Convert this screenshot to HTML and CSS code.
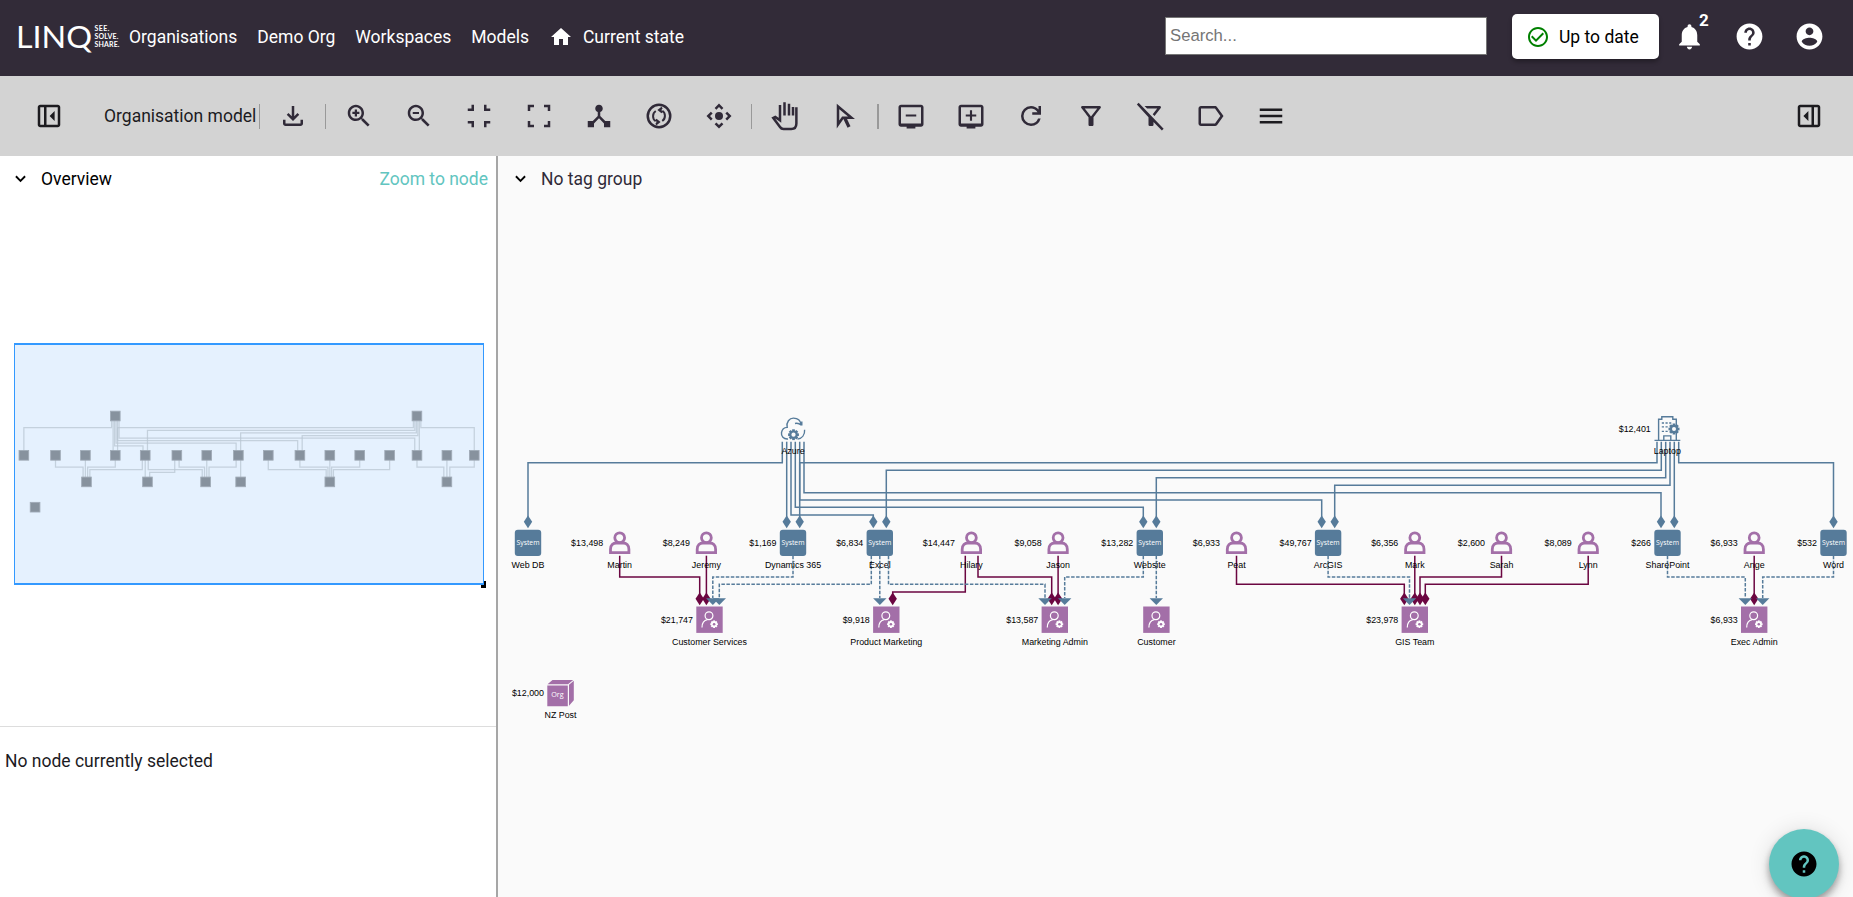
FILE: index.html
```
<!DOCTYPE html>
<html lang="en">

<head>
    <meta charset="UTF-8">
    <meta name="viewport" content="width=device-width, initial-scale=1.0">
    <title>LINQ - Organisation model</title>
    <link rel="stylesheet" href="styles.css">
</head>

<body>
    <header class="header">
        <svg class="logo" width="104" height="50" viewBox="0 -10 104 50">
            <text class="logo-name" x="-1" y="26.5" textLength="76" lengthAdjust="spacingAndGlyphs">LINQ</text>
            <text class="logo-tag" x="77.5" y="10" textLength="15">SEE.</text>
            <text class="logo-tag" x="77.5" y="18" textLength="24">SOLVE.</text>
            <text class="logo-tag" x="77.5" y="26" textLength="25">SHARE.</text>
        </svg>
        <nav class="nav">
            <a>Organisations</a>
            <a>Demo Org</a>
            <a>Workspaces</a>
            <a>Models</a>
            <a class="current">
                <svg width="24" height="24" viewBox="0 0 24 24"><path d="M10 20v-6h4v6h5v-8h3L12 3 2 12h3v8z"/></svg>
                Current state
            </a>
        </nav>
        <input class="search" type="text" placeholder="Search...">
        <button class="status">
            <svg width="24" height="24" viewBox="0 0 24 24"><path d="M16.59 7.58L10 14.17l-3.59-3.58L5 12l5 5 8-8zM12 2C6.48 2 2 6.48 2 12s4.48 10 10 10 10-4.48 10-10S17.52 2 12 2zm0 18c-4.42 0-8-3.58-8-8s3.58-8 8-8 8 3.58 8 8-3.58 8-8 8z"/></svg>
            Up to date
        </button>
        <div class="header-icons">
            <span class="header-icon">
                <svg viewBox="0 0 24 24"><path d="M12 22c1.1 0 2-.9 2-2h-4c0 1.1.89 2 2 2zm6-6v-5c0-3.07-1.64-5.64-4.5-6.32V4c0-.83-.67-1.5-1.5-1.5s-1.5.67-1.5 1.5v.68C7.63 5.36 6 7.92 6 11v5l-2 2v1h16v-1l-2-2z"/></svg>
                <b class="badge">2</b>
            </span>
            <span class="header-icon">
                <svg viewBox="0 0 24 24"><path d="M12 2C6.48 2 2 6.48 2 12s4.48 10 10 10 10-4.48 10-10S17.52 2 12 2zm1 17h-2v-2h2v2zm2.07-7.75l-.9.92C13.45 12.9 13 13.5 13 15h-2v-.5c0-1.1.45-2.1 1.17-2.83l1.24-1.26c.37-.36.59-.86.59-1.41 0-1.1-.9-2-2-2s-2 .9-2 2H8c0-2.21 1.79-4 4-4s4 1.79 4 4c0 .88-.36 1.68-.93 2.25z"/></svg>
            </span>
            <span class="header-icon">
                <svg viewBox="0 0 24 24"><path d="M12 2C6.48 2 2 6.48 2 12s4.48 10 10 10 10-4.48 10-10S17.52 2 12 2zm0 3c1.66 0 3 1.34 3 3s-1.34 3-3 3-3-1.34-3-3 1.34-3 3-3zm0 14.2c-2.5 0-4.71-1.28-6-3.22.03-1.99 4-3.08 6-3.08 1.99 0 5.97 1.09 6 3.08-1.29 1.94-3.5 3.22-6 3.22z"/></svg>
            </span>
        </div>
    </header>

    <div class="toolbar">
        <span class="tool dark"><svg viewBox="0 0 24 24"><path d="M16.5 16V8l-4 4 4 4zM5 21q-.83 0-1.41-.59T3 19V5q0-.83.59-1.41T5 3h14q.83 0 1.41.59T21 5v14q0 .83-.59 1.41T19 21H5zm3-2V5H5v14h3zm2 0h9V5h-9v14z"/></svg></span>
        <span class="toolbar-title">Organisation model</span>
        <span class="divider"></span>
        <span class="tool"><svg viewBox="0 0 24 24"><path d="M12 16l-5-5 1.4-1.45 2.6 2.6V4h2v8.15l2.6-2.6L17 11l-5 5zm-6 4q-.83 0-1.41-.59T4 18v-3h2v3h12v-3h2v3q0 .83-.59 1.41T18 20H6z"/></svg></span>
        <span class="divider"></span>
        <span class="tool"><svg viewBox="0 0 24 24"><path d="M15.5 14h-.79l-.28-.27C15.41 12.59 16 11.11 16 9.5 16 5.91 13.09 3 9.5 3S3 5.91 3 9.5 5.91 16 9.5 16c1.61 0 3.09-.59 4.23-1.57l.27.28v.79l5 4.99L20.49 19l-4.99-5zm-6 0C7.01 14 5 11.99 5 9.5S7.01 5 9.5 5 14 7.01 14 9.5 11.99 14 9.5 14zM8.6 6.7h1.8v1.9h1.9v1.8h-1.9v1.9H8.6v-1.9H6.7V8.6h1.9z"/></svg></span>
        <span class="tool"><svg viewBox="0 0 24 24"><path d="M15.5 14h-.79l-.28-.27C15.41 12.59 16 11.11 16 9.5 16 5.91 13.09 3 9.5 3S3 5.91 3 9.5 5.91 16 9.5 16c1.61 0 3.09-.59 4.23-1.57l.27.28v.79l5 4.99L20.49 19l-4.99-5zm-6 0C7.01 14 5 11.99 5 9.5S7.01 5 9.5 5 14 7.01 14 9.5 11.99 14 9.5 14zM7 8.7h5v1.7H7z"/></svg></span>
        <span class="tool"><svg viewBox="0 0 24 24"><path d="M6 3h2v5H3V6h3zM16 3h2v3h3v2h-5zM3 16h5v5H6v-3H3zM16 16h5v2h-3v3h-2z"/></svg></span>
        <span class="tool"><svg viewBox="0 0 24 24"><path d="M3 3h5v2H5v3H3zM16 3h5v5h-2V5h-3zM3 16h2v3h3v2H3zM19 16h2v5h-5v-2h3z"/></svg></span>
        <span class="tool"><svg viewBox="0 0 24 24"><path d="M17 16l-4-4V8.82C14.16 8.4 15 7.3 15 6c0-1.66-1.34-3-3-3S9 4.34 9 6c0 1.3.84 2.4 2 2.82V12l-4 4H3v5h5v-3.05l4-4.2 4 4.2V21h5v-5h-4z"/></svg></span>
        <span class="tool"><svg viewBox="0 0 24 24" class="line"><circle cx="12" cy="12" r="9"/><path class="thin" d="M9.3 16.2C6.5 14.3 6.6 9.9 9.4 8M14.7 7.8C17.5 9.7 17.4 14.1 14.6 16M14.5 5.3 12 7.2l2.5 2M12 7.2h2.2M9.5 14.8l2.5 2-2.5 2M12 16.8H9.8"/></svg></span>
        <span class="tool"><svg viewBox="0 0 24 24"><circle cx="12" cy="12" r="3.2"/><path d="M12 2l3.5 3.5-1.4 1.4L12 4.8 9.9 6.9 8.5 5.5zM12 22l3.5-3.5-1.4-1.4-2.1 2.1-2.1-2.1-1.4 1.4zM2 12l3.5-3.5 1.4 1.4L4.8 12l2.1 2.1-1.4 1.4zM22 12l-3.5-3.5-1.4 1.4 2.1 2.1-2.1 2.1 1.4 1.4z"/></svg></span>
        <span class="divider"></span>
        <span class="tool"><svg viewBox="0 0 24 24" class="line"><path d="M8 12V3.2M11.6 11.5V1M15.2 11.5V2.2M8 3.2v12.3L4.2 12.7 2.6 13.5 8 20.8Q9 22.4 10.8 22.4h6.2q4.1 0 4.1-4.4V5M18.4 11.5V4.8"/></svg></span>
        <span class="tool"><svg viewBox="0 0 24 24" class="line"><path d="M6.4 4.4v14.4l3.8-5.4h7z"/><path class="thick" d="M11.7 13.4l3.5 7.4"/></svg></span>
        <span class="divider wide"></span>
        <span class="tool"><svg viewBox="0 0 24 24"><path d="M20 3H4c-1.1 0-2 .9-2 2v13.5c0 1.1.9 2 2 2h4.5V22h7v-1.5H20c1.1 0 2-.9 2-2V5c0-1.1-.9-2-2-2zm0 15H4V5h16v13zM7.8 10.7h8.4v1.7H7.8z"/></svg></span>
        <span class="tool"><svg viewBox="0 0 24 24"><path d="M20 3H4c-1.1 0-2 .9-2 2v13.5c0 1.1.9 2 2 2h4.5V22h7v-1.5H20c1.1 0 2-.9 2-2V5c0-1.1-.9-2-2-2zm0 15H4V5h16v13zM7.8 10.7h3.35V7.3h1.7v3.4h3.35v1.7h-3.35v3.4h-1.7v-3.4H7.8z"/></svg></span>
        <span class="tool"><svg viewBox="0 0 24 24"><path d="M12 20q-3.35 0-5.675-2.325T4 12q0-3.35 2.325-5.675T12 4q1.725 0 3.3.712T18 6.75V4h2v7h-7V9h4.2q-.8-1.4-2.187-2.2T12 6Q9.5 6 7.75 7.75T6 12q0 2.5 1.75 4.25T12 18q1.925 0 3.475-1.1T17.65 14h2.1q-.7 2.65-2.85 4.325T12 20z"/></svg></span>
        <span class="tool"><svg viewBox="0 0 24 24"><path d="M7 6h10l-5.01 6.3L7 6zM4.25 5.61C6.27 8.2 10 13 10 13v6c0 .55.45 1 1 1h2c.55 0 1-.45 1-1v-6s3.72-4.8 5.74-7.39c.51-.66.04-1.61-.79-1.61H5.04c-.83 0-1.3.95-.79 1.61z"/></svg></span>
        <span class="tool"><svg viewBox="0 0 24 24"><path d="M16.95 6l-3.57 4.55 1.43 1.43L19.8 5.61c.5-.66.03-1.61-.8-1.61H6.83l2 2zM2.1 1.4.7 2.8 10 13v6q0 1 1 1h2q1 0 1-1v-2.2l6.7 6.7 1.4-1.4z"/></svg></span>
        <span class="tool"><svg viewBox="0 0 24 24"><path d="M16.9 5c-.4-.6-1-1-1.7-1H4C2.9 4 2 4.9 2 6v12c0 1.1.9 2 2 2h11.2c.7 0 1.3-.3 1.7-.9L22 12zM15.2 18H4V6h11.2l4.3 6z"/></svg></span>
        <span class="tool dark"><svg viewBox="0 0 24 24"><path d="M3 18h18v-2H3v2zm0-5h18v-2H3v2zm0-7v2h18V6H3z"/></svg></span>
        <span class="tool dark last"><svg viewBox="0 0 24 24"><path d="M11.5 8v8l-4-4 4-4zM5 21q-.83 0-1.41-.59T3 19V5q0-.83.59-1.41T5 3h14q.83 0 1.41.59T21 5v14q0 .83-.59 1.41T19 21H5zm11-2h3V5h-3v14zm-2 0V5H5v14h9z"/></svg></span>
    </div>

    <main class="main">
        <aside class="side">
            <section class="overview">
                <div class="panel-head">
                    <svg class="chevron" viewBox="0 0 12 8"><path d="M1 1l5 5 5-5"/></svg>
                    <span>Overview</span>
                    <a class="zoom-link">Zoom to node</a>
                </div>
                <svg id="minimap" width="496" height="524" viewBox="0 202 496 524"></svg>
            </section>
            <p class="selection">No node currently selected</p>
        </aside>
        <section class="canvas">
            <div class="panel-head">
                <svg class="chevron" viewBox="0 0 12 8"><path d="M1 1l5 5 5-5"/></svg>
                <span>No tag group</span>
            </div>
            <svg id="diagram" width="1355" height="695" viewBox="498 202 1355 695"></svg>
        </section>
    </main>

    <button class="help-btn">
        <svg width="30" height="30" viewBox="0 0 24 24"><path d="M12 2C6.48 2 2 6.48 2 12s4.48 10 10 10 10-4.48 10-10S17.52 2 12 2zm1 17h-2v-2h2v2zm2.07-7.75l-.9.92C13.45 12.9 13 13.5 13 15h-2v-.5c0-1.1.45-2.1 1.17-2.83l1.24-1.26c.37-.36.59-.86.59-1.41 0-1.1-.9-2-2-2s-2 .9-2 2H8c0-2.21 1.79-4 4-4s4 1.79 4 4c0 .88-.36 1.68-.93 2.25z"/></svg>
    </button>

    <script src="script.js"></script>
</body>

</html>
```
FILE: styles.css
```
* {
    box-sizing: border-box;
}

body {
    margin: 0;
    height: 100vh;
    display: flex;
    flex-direction: column;
    overflow: hidden;
    font-family: Roboto, sans-serif;
    font-size: 17.5px;
    color: #1c1b1f;
    background: #fff;
}

/* Header */
.header {
    display: flex;
    align-items: center;
    flex: none;
    height: 76px;
    padding: 0 14px 0 17px;
    background: #322b38;
    color: #fff;
}

.header svg {
    fill: currentColor;
}

.logo {
    flex: none;
    margin-bottom: 4px;
    overflow: visible;
}

.logo-name {
    font-family: Lato, sans-serif;
    font-weight: 400;
    font-size: 31.5px;
}

.logo-tag {
    font-family: Lato, sans-serif;
    font-weight: 700;
    font-size: 7px;
}

.nav {
    display: flex;
    align-items: center;
    gap: 20px;
    margin: -3px 0 0 8px;
    white-space: nowrap;
}

.nav .current {
    display: flex;
    align-items: center;
    gap: 10px;
}

.search {
    width: 322px;
    height: 38px;
    margin: -4px 25px 0 auto;
    padding: 0 4px;
    border: 1px solid #767676;
    font-family: "Liberation Sans", Arial, sans-serif;
    font-size: 16.7px;
}

.status {
    display: flex;
    align-items: center;
    gap: 9px;
    width: 147px;
    height: 45px;
    margin-top: -3px;
    padding: 0 0 0 14px;
    border: none;
    border-radius: 5px;
    background: #fff;
    color: #000;
    font: 17.5px Roboto, sans-serif;
    box-shadow: 0 3px 4px rgba(0, 0, 0, 0.3);
}

.status svg {
    fill: green;
}

.header-icons {
    display: flex;
    margin-top: -4px;
}

.header-icon {
    position: relative;
    display: flex;
    justify-content: center;
    width: 60px;
}

.header-icon svg {
    width: 31px;
    height: 31px;
}

.badge {
    position: absolute;
    left: 40px;
    top: -11px;
    font-size: 17px;
}

/* Toolbar */
.toolbar {
    display: flex;
    align-items: center;
    flex: none;
    height: 80px;
    padding: 0 14px 0 19px;
    background: #d3d3d3;
}

.tool {
    display: flex;
    justify-content: center;
    flex: none;
    width: 60px;
    fill: #302a38;
}

.tool svg {
    width: 30px;
    height: 30px;
}

.tool.dark {
    fill: #1c1b1f;
}

.tool.last {
    margin-left: auto;
}

.tool .line {
    fill: none;
    stroke: #302a38;
    stroke-width: 2;
}

.tool .thin {
    stroke-width: 1.6;
}

.tool .thick {
    stroke-width: 2.6;
}

.toolbar-title {
    width: 153px;
    margin-left: 25px;
    white-space: nowrap;
}

.divider {
    flex: none;
    width: 1px;
    height: 25px;
    margin: 0 3px 0 2px;
    background: #999;
}

.divider.wide {
    width: 2px;
    margin-right: 2px;
}

/* Panels */
.main {
    display: flex;
    flex: 1;
    min-height: 0;
}

.side {
    width: 498px;
    flex: none;
    border-right: 2px solid #a6a6a6;
}

.overview {
    height: 571px;
    border-bottom: 1px solid #ddd;
}

.overview svg,
.canvas svg {
    display: block;
}

.panel-head {
    display: flex;
    align-items: center;
    height: 46px;
    padding: 0 8px 0 15px;
    color: #000;
}

.chevron {
    width: 11px;
    height: 8px;
    margin-right: 15px;
    fill: none;
    stroke: #000;
    stroke-width: 2;
}

.zoom-link {
    margin-left: auto;
    color: #62c5c0;
}

.selection {
    margin: 24px 0 0 5px;
}

.canvas {
    flex: 1;
    overflow: hidden;
    background: #fafafa;
}

.canvas .panel-head {
    padding-left: 17px;
    color: #302a38;
}

/* Diagram */
.edge {
    fill: none;
    stroke-width: 1.5;
}

.edge.system {
    stroke: #567b9a;
}

.edge.person {
    stroke: #6b0641;
}

.edge.dashed {
    stroke-dasharray: 3.5 1.5;
}

.head.system {
    fill: #567b9a;
}

.head.person {
    fill: #6b0641;
}

.label {
    font: 8.9px "Liberation Sans", Arial, sans-serif;
    fill: #000;
    text-anchor: middle;
}

.label.cost {
    text-anchor: end;
}

.icon-text {
    font: 7.4px "Open Sans", sans-serif;
    fill: #fff;
    text-anchor: middle;
}

.blue {
    fill: #567b9a;
}

.purple {
    fill: #a36fa8;
}

.blue-line {
    fill: none;
    stroke: #567b9a;
    stroke-width: 1.4;
}

.purple-line {
    fill: none;
    stroke: #a36fa8;
    stroke-width: 2.8;
}

.white-line {
    fill: none;
    stroke: #fff;
    stroke-width: 1.2;
}

/* Overview map */
.viewport {
    fill: #e5f1fe;
}

.viewport-x,
.viewport-y {
    fill: #3399ff;
}

.mini-edge {
    fill: none;
    stroke: #b8c5d2;
    stroke-opacity: 0.75;
    stroke-width: 3.6;
}

.mini-node {
    fill: #87929e;
    stroke: #a0abb7;
    stroke-width: 2.5;
}

.help-btn {
    position: fixed;
    right: 14px;
    bottom: -2px;
    display: flex;
    align-items: center;
    justify-content: center;
    width: 70px;
    height: 70px;
    padding: 0;
    border: none;
    border-radius: 50%;
    background: #62c5c0;
    box-shadow: 0 4px 6px rgba(0, 0, 0, 0.25), 0 7px 12px rgba(0, 0, 0, 0.14), 0 1px 22px rgba(0, 0, 0, 0.12);
}
```
FILE: script.js
```
const ROW = [428.7, 542.7, 619.7];

// [type, label, x, y, cost]
const nodes = [
    ["cloud", "Azure", 793, ROW[0]],
    ["building", "Laptop", 1667.3, ROW[0], "$12,401"],
    ["system", "Web DB", 528, ROW[1]],
    ["person", "Martin", 619.7, ROW[1], "$13,498"],
    ["person", "Jeremy", 706.4, ROW[1], "$8,249"],
    ["system", "Dynamics 365", 793, ROW[1], "$1,169"],
    ["system", "Excel", 879.8, ROW[1], "$6,834"],
    ["person", "Hilary", 971.4, ROW[1], "$14,447"],
    ["person", "Jason", 1058.1, ROW[1], "$9,058"],
    ["system", "Website", 1149.8, ROW[1], "$13,282"],
    ["person", "Peat", 1236.5, ROW[1], "$6,933"],
    ["system", "ArcGIS", 1328.1, ROW[1], "$49,767"],
    ["person", "Mark", 1414.8, ROW[1], "$6,356"],
    ["person", "Sarah", 1501.5, ROW[1], "$2,600"],
    ["person", "Lynn", 1588.2, ROW[1], "$8,089"],
    ["system", "SharePoint", 1667.5, ROW[1], "$266"],
    ["person", "Ange", 1754.2, ROW[1], "$6,933"],
    ["system", "Word", 1833.5, ROW[1], "$532"],
    ["team", "Customer Services", 709.5, ROW[2], "$21,747"],
    ["team", "Product Marketing", 886.3, ROW[2], "$9,918"],
    ["team", "Marketing Admin", 1054.8, ROW[2], "$13,587"],
    ["team", "Customer", 1156.4, ROW[2]],
    ["team", "GIS Team", 1414.8, ROW[2], "$23,978"],
    ["team", "Exec Admin", 1754.2, ROW[2], "$6,933"],
    ["org", "NZ Post", 560.5, 693, "$12,000"]
];

// [from x, bend y, to x]
const topEdges = [
    [782.3, 462.7, 528], [786.7, 462.7, 786.7], [791, 515, 873.3],
    [795.3, 507.3, 1143.3], [799.7, 500, 1321.7], [804, 492.7, 1661],
    [1657, 462.7, 799.7], [1661.3, 470.3, 886.3], [1665.7, 477.7, 1156.3],
    [1670, 485.3, 1334.7], [1674.3, 470, 1674.3], [1678.7, 462.7, 1833.5]
];

const personEdges = [
    [619.7, 577, 699.7], [706.4, 577, 706.4], [965.3, 592, 892.7],
    [978, 577, 1051.7], [1058.1, 577, 1058.1], [1236.5, 584.3, 1404.3],
    [1414.8, 577, 1414.8], [1501.5, 577, 1420], [1588.2, 584.3, 1425.3],
    [1754.2, 577, 1754.2]
];

const systemEdges = [
    [793, 577, 712.8], [871.3, 584.3, 719.3], [879.8, 577, 879.8],
    [888.5, 584.3, 1045], [1143.3, 577, 1064.7], [1156.3, 577, 1156.3],
    [1328.1, 577, 1409.5], [1667.5, 577, 1745.3], [1833.5, 577, 1762.7]
];

function gear(cx, cy, r, hole, fill, bg) {
    let teeth = "";
    for (let a = 0; a < 360; a += 45) {
        teeth += `<rect x="${cx - r / 4}" y="${cy - r}" width="${r / 2}" height="${r}" fill="${fill}" transform="rotate(${a} ${cx} ${cy})"/>`;
    }
    return teeth + `<circle cx="${cx}" cy="${cy}" r="${r * 0.76}" fill="${fill}"/><circle cx="${cx}" cy="${cy}" r="${hole}" fill="${bg}"/>`;
}

// Icons are drawn around their own centre
const icons = {
    system: `<rect class="blue" x="-13.2" y="-12.9" width="26.4" height="26.2" rx="3"/>
        <text class="icon-text" y="2.4" textLength="23" lengthAdjust="spacingAndGlyphs">System</text>`,
    person: `<circle class="purple-line" cy="-5" r="4.9"/>
        <path class="purple-line" d="M-9.2 10V6.5C-9.2 2.5-6.5.3-3.5.3h7C6.5.3 9.2 2.5 9.2 6.5v3.5z"/>`,
    team: `<rect class="purple" x="-13.2" y="-13.2" width="26.4" height="26.4"/>
        <circle class="white-line" cx="-0.5" cy="-4" r="3.9"/>
        <path class="white-line" d="M-7.5 7.8C-7.5 3.5-5.3.6-2 0"/>
        ${gear(4.6, 4.5, 3.8, 1.3, "#fff", "#a36fa8")}`,
    cloud: `<path class="blue-line" d="M-5 10.3C-9.5 10.8-12 7.5-11.5 4-11 .8-8.500-1.200-5.800-1.300-7-6.500-3.500-10.700.5-10.600 4.500-10.500 7.500-8 8-4.500M2-5.200Q5-6.200 8.500-3.600M8.800-7.200V-3.300M11.600 1C12 6 9 9.600 4.500 10.400"/>
        ${gear(0.5, 6, 5.4, 2.1, "#567b9a", "#fafafa")}`,
    building: `<path class="blue-line" d="M-8.7 11.5V-9.5H-5.5V-12H5.5V-9.5H9V11.5M-12.8 11.7H13M-3.5 11.5V7.2H3.5V11.5"/>
        <path class="blue-line" stroke-dasharray="2.2 1.5" d="M-5.5-5.7H4M-5.5-1.8H2M-5.5 2.7H2"/>
        ${gear(6.7, 0.3, 5.5, 2, "#567b9a", "#fafafa")}`,
    org: `<path class="purple" d="M-13.2-7.5H7.3V13.2H-13.2zM-13-8.7-8-13H12.7L7.5-8.7zM8.5-8.2 13.3-12.3V7.3L8.5 12.7z"/>
        <text class="icon-text" x="-3" y="4.2" textLength="12.5" lengthAdjust="spacingAndGlyphs">Org</text>`
};

function elbow(x1, y1, bend, x2, y2) {
    return x1 === x2 ? `M${x1} ${y1}V${y2}` : `M${x1} ${y1}V${bend}H${x2}V${y2}`;
}

function diamond(x, y) {
    return `M${x} ${y}l-4.2-6.4 4.2-6.4 4.2 6.4z`;
}

function drawDiagram() {
    let out = "";
    topEdges.forEach(([a, b, c]) => {
        out += `<path class="edge system" d="${elbow(a, 441.7, b, c, 520)}"/>`;
        out += `<path class="head system" d="${diamond(c, 528.2)}"/>`;
    });
    personEdges.forEach(([a, b, c]) => {
        out += `<path class="edge person" d="${elbow(a, 555.7, b, c, 598)}"/>`;
        out += `<path class="head person" d="${diamond(c, 605.2)}"/>`;
    });
    systemEdges.forEach(([a, b, c]) => {
        out += `<path class="edge system dashed" d="${elbow(a, 555.7, b, c, 598)}"/>`;
        out += `<path class="head system" d="M${c - 6.7} 598.3h13.4l-6.7 6.7z"/>`;
    });
    nodes.forEach(([type, label, x, y, cost]) => {
        out += `<g transform="translate(${x} ${y})">${icons[type]}`;
        out += `<text class="label" y="25.1">${label}</text>`;
        if (cost) out += `<text class="label cost" x="-16.5" y="3.1">${cost}</text>`;
        out += "</g>";
    });
    document.getElementById("diagram").innerHTML = out;
}

function drawMinimap() {
    let out = `<rect x="481" y="581" width="5" height="7"/><rect class="viewport" x="14" y="343" width="470" height="242"/>`;
    out += `<g transform="translate(-158.3 268.1) scale(.345)">`;
    topEdges.forEach(([a, b, c]) => {
        out += `<path class="mini-edge" d="${elbow(a, 441, b, c, 530)}"/>`;
    });
    personEdges.concat(systemEdges).forEach(([a, b, c]) => {
        out += `<path class="mini-edge" d="${elbow(a, 555, b, c, 607)}"/>`;
    });
    nodes.forEach(([type, label, x, y]) => {
        out += `<rect class="mini-node" x="${x - 14}" y="${y - 14}" width="28" height="28"/>`;
    });
    out += "</g>";
    out += `<path class="viewport-x" d="M14 343h470v2H14zM14 583h470v2H14z"/><path class="viewport-y" d="M14 343h1v242h-1zM483 343h1v242h-1z"/>`;
    document.getElementById("minimap").innerHTML = out;
}

drawDiagram();
drawMinimap();
```
